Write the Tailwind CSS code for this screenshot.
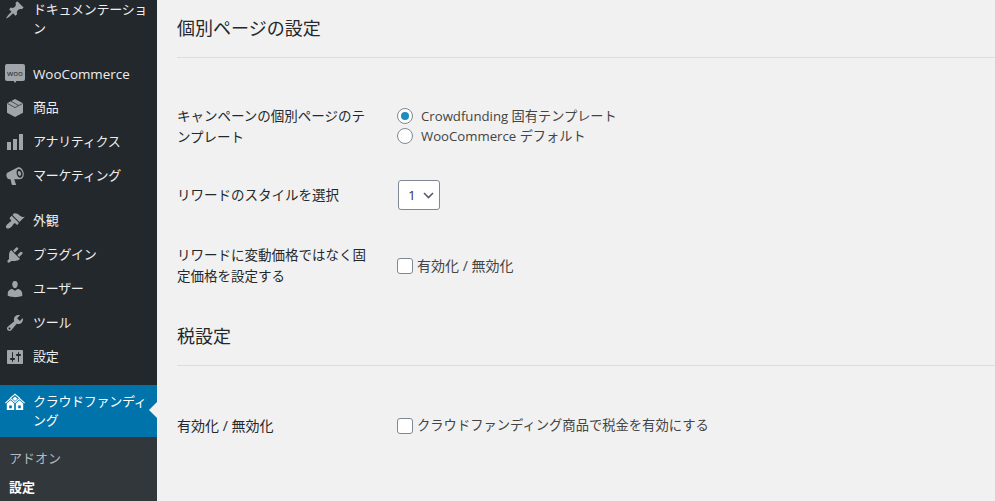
<!DOCTYPE html>
<html lang="ja">
<head>
    <meta charset="UTF-8">
    <title>個別ページの設定</title>
    <script src="https://cdn.jsdelivr.net/npm/@tailwindcss/browser@4"></script>
</head>
<body class="h-[501px] overflow-hidden bg-[#f1f1f1] font-['Open_Sans','Noto_Sans_CJK_JP',sans-serif] text-[14px] leading-[19px] text-[#23282d]">
<div class="flex h-[501px]">
    <!-- admin menu -->
    <aside class="w-[157px] shrink-0 bg-[#23282d] text-[#eeeeee] overflow-hidden text-[13px] tracking-[-.3px]">
        <nav class="-mt-[7px] flex flex-col">
            <a class="flex pl-[33px] pr-2 py-[7px] relative mb-[12px]">
                <svg class="absolute left-[5px] top-[7px] w-5 h-5 fill-[#a0a5aa]" viewBox="0 0 20 20"><path d="M10.44 3.02l1.82-1.82 6.36 6.35-1.83 1.82c-1.05-.68-2.48-.57-3.41.36l-.75.75c-.92.93-1.04 2.35-.35 3.41l-1.83 1.82-2.41-2.41-2.8 2.79c-.42.42-3.38 2.71-3.8 2.29s1.86-3.39 2.28-3.81l2.79-2.79L4.1 9.36l1.83-1.82c1.05.69 2.48.57 3.4-.36l.75-.75c.93-.92 1.05-2.35.36-3.41z"/></svg>
                <span>ドキュメンテーション</span>
            </a>
            <a class="flex items-center h-[34px] pl-[33px] relative">
                <div class="absolute left-[5px] top-[7px] w-5 h-[17px] rounded-[2px] bg-[#a0a5aa] flex items-center justify-center text-[8px] leading-none tracking-normal text-[#23282d]">woo<span class="absolute left-[8px] top-[16px] border-x-[2px] border-t-[3px] border-x-transparent border-t-[#a0a5aa]"></span></div>
                <span class="text-[13.4px] tracking-normal">WooCommerce</span>
            </a>
            <a class="flex items-center h-[34px] pb-[2px] pl-[33px] relative">
                <svg class="absolute left-[5px] top-[7px] w-5 h-5" viewBox="0 0 20 20"><path class="fill-[#a0a5aa]" d="M10 1l8 4.300v9.400L10 19l-8-4.300V5.300z"/><path class="stroke-[#23282d]" stroke-width=".7" fill="none" d="M2.500 5.500L10 9.600l7.500-4.100M6 3.200l7.600 4.300"/></svg>
                <span>商品</span>
            </a>
            <a class="flex items-center h-[34px] pb-[2px] pl-[33px] relative">
                <svg class="absolute left-[5px] top-[7px] w-5 h-5 fill-[#a0a5aa]" viewBox="0 0 20 20"><path d="M18 18V2h-4v16h4zm-6 0V7H8v11h4zm-6 0v-8H2v8h4z"/></svg>
                <span>アナリティクス</span>
            </a>
            <a class="flex items-center h-[34px] pb-[2px] pl-[33px] relative mb-[11px]">
                <svg class="absolute left-[5px] top-[7px] w-5 h-5 fill-[#a0a5aa]" viewBox="0 0 20 20"><path fill-rule="evenodd" d="M13 1.300c2.600-.7 5 2 5.600 5.200.6 3.200-.5 6-2.700 6.600-.3.100-.6.100-.9.100H9.200l1.800 5.200c.1.300-.1.600-.4.600H7.300c-.3 0-.5-.2-.6-.4L5.600 13.200H4.500c-1.400 0-2.600-1.300-3-3-.4-1.700.1-3.200 1.300-3.800zm.5 1.700c-1.600.4-2.300 2.600-1.700 5 .6 2.400 2.300 4 3.900 3.600 1.600-.4 2.300-2.600 1.700-5-.6-2.400-2.300-4-3.900-3.600zm.4 2c.9-.2 1.800.7 2.100 2s0 2.500-.9 2.700c-.9.200-1.800-.7-2.100-2s0-2.500.9-2.700z"/></svg>
                <span>マーケティング</span>
            </a>
            <a class="flex items-center h-[34px] pb-[2px] pl-[33px] relative">
                <svg class="absolute left-[5px] top-[7px] w-5 h-5 fill-[#a0a5aa]" viewBox="0 0 20 20"><path d="M14.48 11.06L7.41 3.99l1.5-1.5c.5-.56 2.3-.47 3.51.32 1.21.8 1.43 1.28 2.91 2.1 1.18.64 2.45 1.26 4.45.85zm-.71.71L6.7 4.7 4.93 6.47c-.39.39-.39 1.02 0 1.41l1.06 1.06c.39.39.39 1.03 0 1.42-.6.6-1.43 1.11-2.21 1.69-.35.26-.7.53-1.01.84C1.43 13.23.4 16.06 1.4 17.06c.99 1 3.8-.04 5.14-1.39.3-.3.57-.65.83-1 .58-.78 1.09-1.61 1.69-2.21.39-.39 1.02-.39 1.41 0l1.06 1.06c.39.39 1.02.39 1.41 0z"/></svg>
                <span>外観</span>
            </a>
            <a class="flex items-center h-[34px] pb-[2px] pl-[33px] relative">
                <svg class="absolute left-[5px] top-[7px] w-5 h-5 fill-[#a0a5aa]" viewBox="0 0 20 20"><path d="M13.11 4.36L9.87 7.6 8 5.73l3.24-3.24c.35-.34 1.05-.2 1.56.32.52.51.66 1.21.31 1.55zm-8 1.77l.91-1.12 9.01 9.01-1.19.84c-.71.71-2.63 1.16-3.82 1.16H6.14L4.9 17.26c-.59.59-1.54.59-2.12 0-.59-.58-.59-1.53 0-2.12l1.24-1.24v-3.88c0-1.13.4-3.19 1.09-3.89zm7.26 3.97l3.24-3.24c.34-.35 1.04-.21 1.55.31.52.51.66 1.21.31 1.55l-3.24 3.25z"/></svg>
                <span>プラグイン</span>
            </a>
            <a class="flex items-center h-[34px] pb-[2px] pl-[33px] relative">
                <svg class="absolute left-[5px] top-[7px] w-5 h-5 fill-[#a0a5aa]" viewBox="0 0 20 20"><path d="M10 9.25c-2.27 0-2.73-3.44-2.73-3.44C7 4.02 7.82 2 9.970 2c2.160 0 2.980 2.020 2.710 3.810 0 0-.41 3.440-2.680 3.440zm0 2.570L12.720 10c2.390 0 4.520 2.330 4.520 4.530v2.490s-3.650 1.130-7.240 1.130c-3.650 0-7.240-1.130-7.240-1.130v-2.490c0-2.250 1.940-4.480 4.470-4.480z"/></svg>
                <span>ユーザー</span>
            </a>
            <a class="flex items-center h-[34px] pb-[2px] pl-[33px] relative">
                <svg class="absolute left-[5px] top-[7px] w-5 h-5 fill-[#a0a5aa]" viewBox="0 0 20 20"><path d="M16.68 9.770c-1.340 1.340-3.300 1.670-4.950.99l-5.410 6.520c-.99.99-2.590.99-3.580 0s-.99-2.590 0-3.570l6.520-5.420c-.68-1.650-.35-3.610.99-4.950 1.280-1.280 3.120-1.620 4.720-1.060l-2.890 2.890 2.820 2.820 2.860-2.870c.53 1.580.18 3.390-1.080 4.650zM3.810 16.210c.4.39 1.040.39 1.430 0 .4-.4.4-1.040 0-1.430-.39-.4-1.030-.4-1.430 0-.39.39-.39 1.030 0 1.430z"/></svg>
                <span>ツール</span>
            </a>
            <a class="flex items-center h-[34px] pb-[2px] pl-[33px] relative mb-[11px]">
                <svg class="absolute left-[5px] top-[7px] w-5 h-5 fill-[#a0a5aa]" viewBox="0 0 20 20"><path d="M18 16V4c0-.55-.45-1-1-1H3c-.55 0-1 .45-1 1v12c0 .55.45 1 1 1h14c.55 0 1-.45 1-1zM8 11h1c.55 0 1 .45 1 1s-.45 1-1 1H8v1.500c0 .28-.22.5-.5.5s-.5-.22-.5-.5V13H6c-.55 0-1-.45-1-1s.45-1 1-1h1V5.500c0-.28.22-.5.5-.5s.5.22.5.5V11zm5-2h-1c-.55 0-1-.45-1-1s.45-1 1-1h1V5.500c0-.28.22-.5.5-.5s.5.22.5.5V7h1c.55 0 1 .45 1 1s-.45 1-1 1h-1v5.500c0 .28-.22.5-.5.5s-.5-.22-.5-.5V9z"/></svg>
                <span>設定</span>
            </a>
            <!-- current menu -->
            <a class="flex pl-[33px] pr-1 py-[7px] relative bg-[#0073aa] text-white">
                <svg class="absolute left-[5px] top-[8px] w-5 h-[17px] fill-white" viewBox="0 0 20 17">
                    <path d="M5 4.800L10 .4l5 4.400-.8.8L10 2 5.800 5.600z"/>
                    <path d="M10 3.400l2.500 2.300L10 8 7.500 5.700z"/>
                    <path d="M0 9.700l5.500-5 4.500 4 4.500-4 5.500 5-.8.8-4.700-4.200-4.500 4-4.500-4-4.700 4.200z"/>
                    <path fill-rule="evenodd" d="M1.800 10.500l3.700-3.300 3.700 3.300V17H1.800zM4.200 12.500v2.700h2.600v-2.700zM10.800 10.500l3.700-3.300 3.700 3.300V17h-7.400zM13.200 12.500v2.700h2.600v-2.700z"/>
                </svg>
                <span>クラウドファンディング</span>
                <span class="absolute right-0 top-[17px] border-y-[8px] border-r-[8px] border-y-transparent border-r-[#f1f1f1]"></span>
            </a>
            <div class="bg-[#32373c] pt-[6px] pb-[10px] text-[13px] leading-[18px] tracking-normal">
                <a class="block pl-[9px] py-[6px] text-[#b4b9be]">アドオン</a>
                <a class="block pl-[9px] py-[6px] -mt-[1px] text-white font-semibold">設定</a>
            </div>
        </nav>
    </aside>

    <!-- settings form -->
    <main class="flex-1 pl-[20px] text-[13.5px] leading-[21px]">
        <section class="h-[58px] border-b border-[#dddddd] flex items-center">
            <h2 class="text-[18px] leading-[24px] font-normal -mt-[1px]">個別ページの設定</h2>
        </section>
        <div class="pt-[48px] flex">
            <div class="w-[220px] pr-[20px]">キャンペーンの個別ページのテンプレート</div>
            <div class="text-[#444444] text-[13.2px]">
                <label class="flex items-center h-[20px] gap-2">
                    <span class="w-4 h-4 rounded-full border border-[#7e8993] bg-white flex items-center justify-center"><span class="w-2 h-2 rounded-full bg-[#1e8cbe]"></span></span>
                    <span class="pt-[1px]">Crowdfunding 固有テンプレート</span>
                </label>
                <label class="flex items-center h-[20px] gap-2">
                    <span class="w-4 h-4 rounded-full border border-[#7e8993] bg-white"></span>
                    <span>WooCommerce デフォルト</span>
                </label>
            </div>
        </div>
        <div class="pt-[32px] flex items-center">
            <div class="w-[221px]">リワードのスタイルを選択</div>
            <div class="w-[42px] h-[30px] rounded-[3px] border border-[#7e8993] bg-white flex items-center pl-[9px] gap-[7px] text-[#32373c]">
                <span>1</span>
                <svg class="w-[11px] h-[7px] stroke-[#555d66]" viewBox="0 0 11 7" fill="none" stroke-width="1.600"><path d="M1 1l4.500 4.500L10 1"/></svg>
            </div>
        </div>
        <div class="pt-[35px] flex items-center">
            <div class="w-[220px] pr-[20px]">リワードに変動価格ではなく固定価格を設定する</div>
            <label class="flex items-center gap-1 text-[#444444] text-[14px] -mt-[1px]">
                <span class="w-4 h-4 rounded-[3px] border border-[#7e8993] bg-white"></span>
                有効化 / 無効化
            </label>
        </div>
        <section class="h-[58px] border-b border-[#dddddd] flex items-center mt-[21px]">
            <h2 class="text-[18px] leading-[24px] font-normal -mt-[1px]">税設定</h2>
        </section>
        <div class="pt-[49px] flex items-center">
            <div class="w-[220px] pr-[20px] text-[14px]">有効化 / 無効化</div>
            <label class="flex items-center gap-1 text-[#444444] text-[13.3px]">
                <span class="w-4 h-4 rounded-[3px] border border-[#7e8993] bg-white"></span>
                クラウドファンディング商品で税金を有効にする
            </label>
        </div>
    </main>
</div>
</body>
</html>
